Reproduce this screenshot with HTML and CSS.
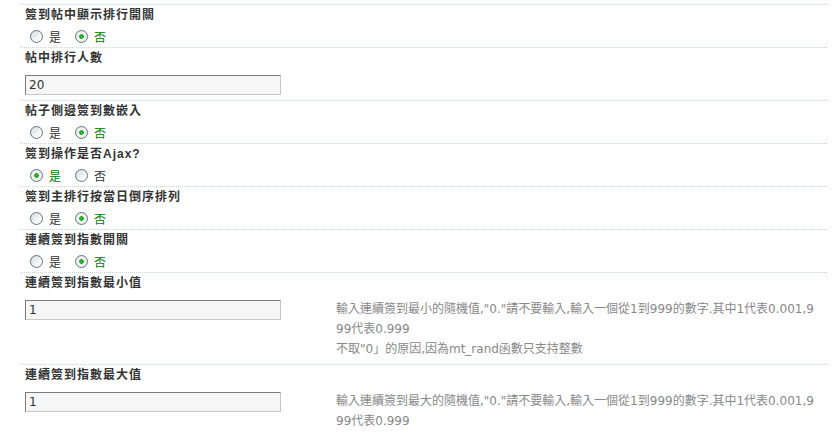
FILE: index.html
```html
<!DOCTYPE html>
<html lang="zh-Hant">
<head>
<meta charset="utf-8">
<link rel="stylesheet" href="styles.css">
</head>
<body>
<div class="form">
  <div class="row first-gap"></div>
  <div class="row">
    <div class="title">簽到帖中顯示排行開關</div>
    <div class="radios">
      <label class="opt"><input type="radio" name="r1"><span>是</span></label>
      <label class="opt"><input type="radio" name="r1" checked><span>否</span></label>
    </div>
  </div>
  <div class="row">
    <div class="title">帖中排行人數</div>
    <div class="field"><input class="text" type="text" value="20"></div>
  </div>
  <div class="row">
    <div class="title">帖子側邊簽到數嵌入</div>
    <div class="radios">
      <label class="opt"><input type="radio" name="r2"><span>是</span></label>
      <label class="opt"><input type="radio" name="r2" checked><span>否</span></label>
    </div>
  </div>
  <div class="row">
    <div class="title">簽到操作是否Ajax?</div>
    <div class="radios">
      <label class="opt"><input type="radio" name="r3" checked><span>是</span></label>
      <label class="opt"><input type="radio" name="r3"><span>否</span></label>
    </div>
  </div>
  <div class="row">
    <div class="title">簽到主排行按當日倒序排列</div>
    <div class="radios">
      <label class="opt"><input type="radio" name="r4"><span>是</span></label>
      <label class="opt"><input type="radio" name="r4" checked><span>否</span></label>
    </div>
  </div>
  <div class="row">
    <div class="title">連續簽到指數開關</div>
    <div class="radios">
      <label class="opt"><input type="radio" name="r5"><span>是</span></label>
      <label class="opt"><input type="radio" name="r5" checked><span>否</span></label>
    </div>
  </div>
  <div class="row">
    <div class="title">連續簽到指數最小值</div>
    <div class="field">
      <input class="text" type="text" value="1">
      <div class="desc">輸入連續簽到最小的隨機值,"0."請不要輸入,輸入一個從1到999的數字.其中1代表0.001,999代表0.999<br>不取"0」的原因,因為mt_rand函數只支持整數</div>
    </div>
  </div>
  <div class="row">
    <div class="title">連續簽到指數最大值</div>
    <div class="field">
      <input class="text" type="text" value="1">
      <div class="desc">輸入連續簽到最大的隨機值,"0."請不要輸入,輸入一個從1到999的數字.其中1代表0.001,999代表0.999</div>
    </div>
  </div>
</div>
</body>
</html>
```
FILE: styles.css
```css
html, body {
  margin: 0;
  padding: 0;
  background: #fff;
}
body {
  font-family: "Liberation Sans", "Noto Sans CJK TC", sans-serif;
  font-size: 12px;
  color: #333;
}
.form {
  margin-left: 20px;
  width: 807px;
}
.row {
  border-top: 1px dotted #c9d5d9;
  padding-left: 5px;
}
.first-gap {
  border-top: none;
  height: 4px;
}
.title {
  font-weight: bold;
  letter-spacing: 1px;
  line-height: 20px;
  padding-bottom: 1px;
  color: #333;
}
.radios {
  display: flex;
  align-items: center;
  height: 21px;
  padding-left: 5px;
  gap: 14px;
}
.opt {
  display: flex;
  align-items: center;
  gap: 6px;
  color: #333;
}
.opt input {
  appearance: none;
  -webkit-appearance: none;
  margin: 0;
  width: 13px;
  height: 13px;
  border-radius: 50%;
  border: 1px solid #5f7489;
  background: linear-gradient(135deg, #d6d9dc 0%, #f4f4f4 60%, #fff 100%);
  box-sizing: border-box;
}
.opt input:checked {
  background: radial-gradient(circle, #3cb43c 0, #23a023 2px, #f2f4f2 2.6px, #e2e5e8 100%);
}
.opt input:checked + span {
  color: #008000;
}
.field {
  display: flex;
  align-items: flex-start;
  padding: 6px 0 5px;
}
.text {
  width: 256px;
  height: 20px;
  box-sizing: border-box;
  margin: 0;
  padding: 0 3px;
  border: 1px solid;
  border-color: #7b7b7b #c8c8c8 #c8c8c8 #7b7b7b;
  background: #f6f6f6;
  font-family: "DejaVu Sans", sans-serif;
  font-size: 12px;
  color: #333;
  flex: none;
}
.desc {
  margin-left: 55px;
  margin-top: -1px;
  width: 480px;
  line-height: 20px;
  color: #888;
  word-break: break-all;
  font-family: "DejaVu Sans", "Noto Sans CJK TC", sans-serif;
}
```
